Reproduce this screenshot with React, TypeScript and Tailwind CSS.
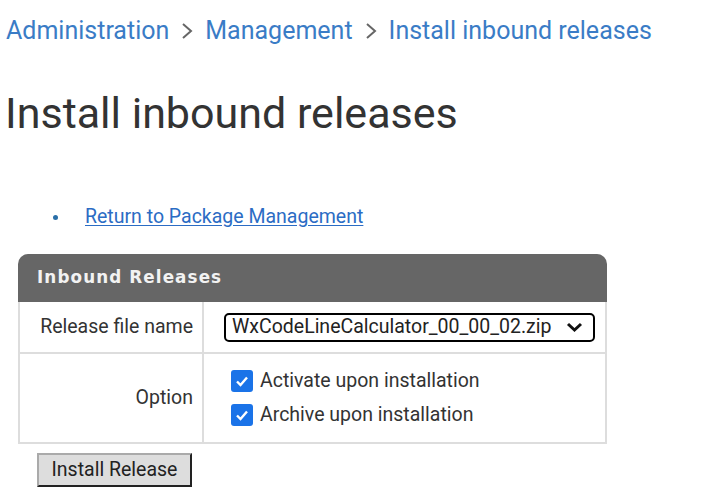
import React from 'react';

export default function App() {
  return (
    <div className="min-h-[503px] bg-white font-['Roboto',sans-serif] text-[#333]">
      {/* Breadcrumb */}
      <div className="flex items-center gap-[9px] pl-[6px] pt-[16px] text-[25px] leading-[30px] text-[#3a7cc6]">
        <span>Administration</span>
        <svg width="14" height="18" viewBox="0 0 14 18" className="mx-[2px]">
          <path d="M3 2 L11 9 L3 16" fill="none" stroke="#666" strokeWidth="2" />
        </svg>
        <span>Management</span>
        <svg width="14" height="18" viewBox="0 0 14 18" className="mx-[2px]">
          <path d="M3 2 L11 9 L3 16" fill="none" stroke="#666" strokeWidth="2" />
        </svg>
        <span>Install inbound releases</span>
      </div>

      <h1 className="pl-[5px] pt-[43px] text-[43px] leading-[48px] text-[#333]">Install inbound releases</h1>

      {/* Links */}
      <ul className="pl-[53px] pt-[68px]">
        <li className="flex items-center gap-[27px] text-[19.5px] leading-[24px]">
          <span className="h-[5px] w-[5px] rounded-full bg-[#2a6fa8]" />
          <a href="#" className="text-[#2b6cc4] underline underline-offset-2">Return to Package Management</a>
        </li>
      </ul>

      {/* Form */}
      <div className="ml-[18px] mt-[25px] w-[589px]">
        <div className="flex h-[48px] items-center rounded-t-[10px] bg-[#666] pl-[19px] font-['DejaVu_Sans',sans-serif] text-[16.8px] font-bold tracking-[1.1px] text-[#f2f2f2]">
          Inbound Releases
        </div>
        <div className="grid grid-cols-[184px_1fr] border-x-2 border-b-2 border-[#ddd]">
          <div className="flex h-[52px] items-center justify-end border-r-2 border-b-2 border-[#ddd] pr-[9px] text-[19.5px] text-[#333]">
            Release file name
          </div>
          <div className="flex h-[52px] items-center border-b-2 border-[#ddd] pl-[20px]">
            <div className="flex h-[29px] w-[371px] items-center justify-between rounded-[5px] border-2 border-black pl-[6px] pr-[10px] text-[19.5px] text-[#222]">
              <span>WxCodeLineCalculator_00_00_02.zip</span>
              <svg width="17" height="11" viewBox="0 0 17 11">
                <path d="M2 2 L8.5 8 L15 2" fill="none" stroke="#111" strokeWidth="3" />
              </svg>
            </div>
          </div>
          <div className="flex h-[88px] items-center justify-end border-r-2 border-[#ddd] pr-[9px] text-[19.5px] text-[#333]">
            Option
          </div>
          <div className="flex flex-col justify-center gap-[12px] pl-[27px]">
            {['Activate upon installation', 'Archive upon installation'].map((t) => (
              <label key={t} className="flex items-center gap-[7px] text-[19.5px] leading-[22px] text-[#333]">
                <span className="flex h-[22px] w-[22px] items-center justify-center rounded-[3px] bg-[#1a73e8]">
                  <svg width="14" height="12" viewBox="0 0 14 12">
                    <path d="M2 6.5 L5.5 10 L12 2.5" fill="none" stroke="#fff" strokeWidth="2.4" />
                  </svg>
                </span>
                {t}
              </label>
            ))}
          </div>
        </div>
      </div>

      <div className="pl-[37px] pt-[9px]">
        <button className="h-[34px] w-[155px] border-2 border-t-[#aaa] border-l-[#aaa] border-r-[#222] border-b-[#222] bg-[#ddd] text-[19.5px] text-[#222]">
          Install Release
        </button>
      </div>
    </div>
  );
}
